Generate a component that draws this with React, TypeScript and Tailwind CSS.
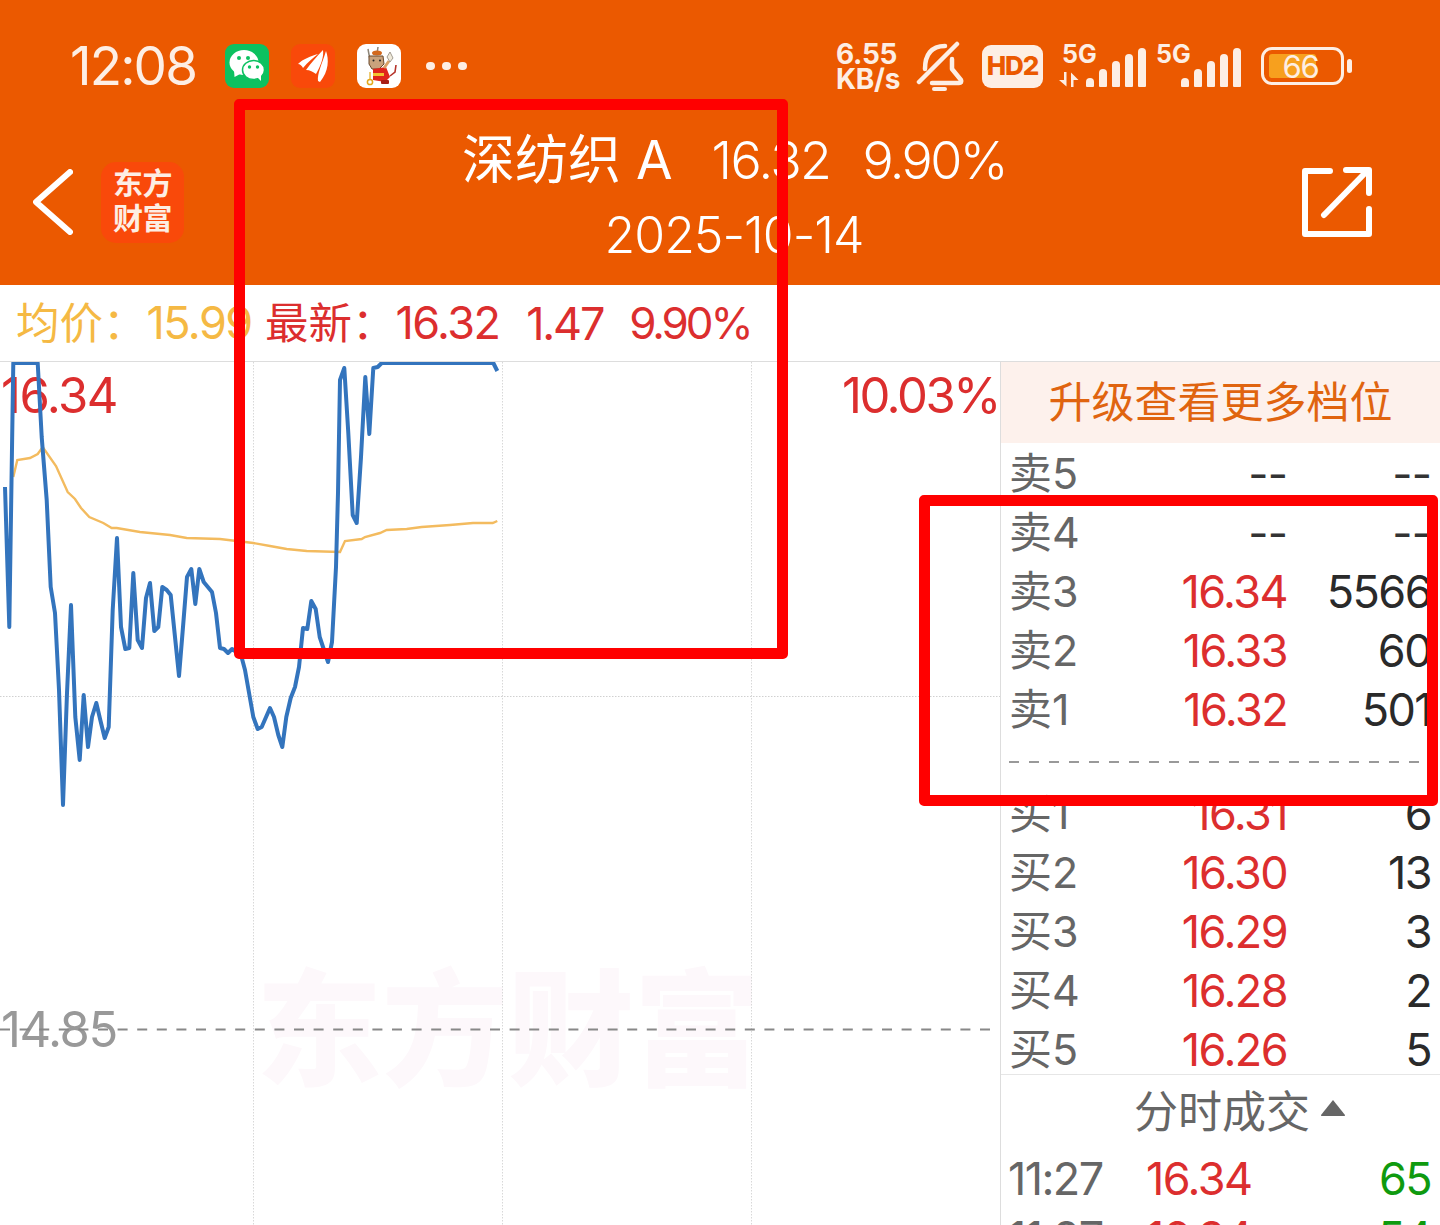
const blue = "5,487 9.3,627 13.3,363 37.7,363 41.7,437 46.7,500 50.7,587 55,613 59,690 63,805 67,693 71,605 75.3,717 79.7,760 83.7,695 88,747 92,717 96.3,703 100.3,720 104.7,738 108.7,727 112.7,610 117,538 121,627 125.3,649 129.3,648 133.3,573 137.7,640 142,648 146,598 150,583 154.3,631 158.3,627 162.3,587 166.7,590 170.7,595 175,637 179,676 183,627 187,577 191.3,569 195.3,604 199.3,569 203.7,582 212,592 216,613 220,648 224,649 228,653 232,649 241,655 245,670 253.3,717 257.7,729 261.7,727 270,708 274,717 278.3,735 282.3,747 286.3,717 290.7,698 295,687 299,667 303,628 307.3,629 311.3,601 315.7,609 319.7,637 328,662 332,642 336,567 338,493 340,380 344.3,368 348.3,433 352.7,515 356.7,523 361,457 365.3,377 369.3,434 373.3,368 377.7,367 381.7,363 493.3,363 497.3,371";
const yellow = "13.3,477 17.3,460 30,458 37.7,454 42.7,447 56,466 67.7,492 75,499 81,508 89.3,517 103.3,523 111.7,528 116.7,528 140,532 170,535 186.7,538 220,539 253.3,543 270,546 286.7,549 306.7,551 340,552 345,541 361.7,539 365,537 380,533 386.7,530 406.7,529 421.7,527 450,525 473,523 492.7,523 497.3,521";

const sells = [
  ["卖5", "--", "--"],
  ["卖4", "--", "--"],
  ["卖3", "16.34", "5566"],
  ["卖2", "16.33", "60"],
  ["卖1", "16.32", "501"],
];
const buys = [
  ["买1", "16.31", "6"],
  ["买2", "16.30", "13"],
  ["买3", "16.29", "3"],
  ["买4", "16.28", "2"],
  ["买5", "16.26", "5"],
];

function Row({ r }: { r: string[] }) {
  const dash = r[1] === "--";
  return (
    <div className="grid h-[59px] shrink-0 grid-cols-[100px_178px_144px] items-center pl-[8px] leading-none">
      <span className="text-[43px] text-[#666666]">{r[0]}</span>
      <span className={dash ? "text-right text-[44px] tracking-[-0.02em] text-[#333333]" : "text-right text-[45px] tracking-[-0.035em] text-[#dc2e2e]"}>{r[1]}</span>
      <span className={dash ? "text-right text-[44px] tracking-[-0.02em] text-[#333333]" : "text-right text-[45px] tracking-[-0.035em] text-[#2a2a2a]"}>{r[2]}</span>
    </div>
  );
}

function Tick({ t, p, q }: { t: string; p: string; q: string }) {
  return (
    <div className="grid h-[59px] shrink-0 grid-cols-[138px_107px_1fr] items-center pl-[7px] pr-[9px] text-[45px] leading-none tracking-[-0.035em]">
      <span className="text-[#666666]">{t}</span>
      <span className="text-[#dc2e2e]">{p}</span>
      <span className="text-right text-[#0f9a0f]">{q}</span>
    </div>
  );
}

function Bars({ hs }: { hs: number[] }) {
  return (
    <div className="flex items-end gap-[5px]">
      {hs.map((h, i) => (
        <div key={i} className="w-[8px] rounded-t-[4px] rounded-b-[1px] bg-[#fdeee4]" style={{ height: h }} />
      ))}
    </div>
  );
}

function WeChat() {
  return (
    <div className="h-[44px] w-[44px] rounded-[9px] bg-[#0cc160]">
      <svg viewBox="0 0 44 44" className="h-full w-full">
        <ellipse cx="19" cy="18.5" rx="14.5" ry="12.5" fill="#fff" />
        <path d="M9 26 L9.5 33 L17 29 Z" fill="#fff" />
        <ellipse cx="28.5" cy="26" rx="11" ry="9.5" fill="#fff" stroke="#0cc160" strokeWidth="1.5" />
        <path d="M32 33 L36 37 L36 31 Z" fill="#fff" />
        <circle cx="14" cy="14" r="2" fill="#0cc160" />
        <circle cx="23" cy="14" r="2" fill="#0cc160" />
        <circle cx="24.5" cy="23" r="1.7" fill="#0cc160" />
        <circle cx="32.5" cy="23" r="1.7" fill="#0cc160" />
      </svg>
    </div>
  );
}

function Wings() {
  return (
    <div className="h-[44px] w-[44px] rounded-[9px] bg-[#f9490a]">
      <svg viewBox="0 0 44 44" className="h-full w-full" fill="#fff">
        <path d="M7 20 C12 15 20 12 27 10 C22 14 17 18 12 24 C11 22 9 20 7 20 Z" />
        <path d="M15 26 C20 19 26 12 32 6 C33 13 30 21 25 30 C22 28 19 26 15 26 Z" />
        <path d="M27 37 C26 30 31 20 35 7 C38 15 38 27 29 38 Z" />
      </svg>
    </div>
  );
}

function Bull() {
  return (
    <div className="h-[44px] w-[44px] rounded-[9px] bg-white">
      <svg viewBox="0 0 44 44" className="h-full w-full">
        <path d="M11 5 L13 16 M21 3 L20 10" stroke="#8d8578" strokeWidth="1.5" />
        <ellipse cx="20" cy="9" rx="5" ry="2.5" fill="#d2691e" />
        <path d="M12 12 L26 12 L27 20 L22 25 L15 25 L12 20 Z" fill="#c9a27c" stroke="#6b4a2e" strokeWidth="1" />
        <circle cx="16.5" cy="16.5" r="1" fill="#222" />
        <circle cx="23" cy="16.5" r="1" fill="#222" />
        <path d="M16 25 L29 23 L33 33 L28 38 L16 36 Z" fill="#e0251b" />
        <path d="M27 24 L32 17" stroke="#d9a066" strokeWidth="3" />
        <path d="M30 13 L33 8 L36 14 L33 18 Z" fill="#efe9da" stroke="#8d8578" strokeWidth="0.8" />
        <path d="M33 32 L38 28 L39 21" fill="none" stroke="#b5332a" strokeWidth="1.6" />
        <circle cx="13" cy="38" r="2.6" fill="none" stroke="#e3a81a" strokeWidth="1.5" />
        <path d="M13 28 L13 35" stroke="#e3a81a" strokeWidth="1.2" />
        <rect x="16" y="29" width="11" height="3" fill="#f2c230" />
        <rect x="24" y="36" width="8" height="4" rx="1" fill="#a81e16" />
      </svg>
    </div>
  );
}

export default function App() {
  return (
    <div className="relative flex h-[1225px] w-[1440px] flex-col overflow-hidden bg-white font-[Inter,'Noto_Sans_CJK_SC',sans-serif]">
      <header className="flex h-[285px] shrink-0 flex-col bg-[#eb5900] text-white">
        <div className="flex h-[122px] shrink-0 items-center pl-[70px] pr-[88px] pt-[10px] text-[#fdeee4]">
          <span className="w-[155px] text-[53px] leading-none tracking-[-0.035em]">12:08</span>
          <div className="flex gap-[22px]">
            <WeChat />
            <Wings />
            <Bull />
          </div>
          <div className="ml-[25px] flex gap-[7px]">
            <span className="h-[8px] w-[9px] rounded-full bg-[#fdeee4]" />
            <span className="h-[8px] w-[9px] rounded-full bg-[#fdeee4]" />
            <span className="h-[8px] w-[9px] rounded-full bg-[#fdeee4]" />
          </div>
          <div className="ml-auto flex items-center">
            <div className="flex w-[66px] flex-col whitespace-nowrap pt-[1px] text-[28px] font-bold leading-[25px] tracking-[-0.01em]">
              <span>6.55</span>
              <span>KB/s</span>
            </div>
            <svg viewBox="0 0 50 50" className="ml-[14px] h-[50px] w-[50px]" fill="none" stroke="#fdeee4" strokeWidth="4.5" strokeLinecap="round" strokeLinejoin="round">
              <path d="M41 3 L3 41" />
              <path d="M9 28 C9 14 15 5 29 5" />
              <path d="M36 18 L36 28 L45 39 C46 41 45 42 43 42 L16 42" />
              <path d="M18 48 L29 48" strokeWidth="4" />
            </svg>
            <div className="ml-[16px] flex h-[43px] w-[61px] items-center justify-center rounded-[9px] bg-[#fdeee4] text-[26px] font-extrabold leading-none tracking-[-0.04em] text-[#eb5900]">
              HD2
            </div>
            <div className="relative ml-[16px] flex h-[42px] items-end">
              <span className="absolute left-[3px] top-[-3px] text-[25px] font-bold leading-none">5G</span>
              <svg viewBox="0 0 20 15" className="mr-[7px] h-[15px] w-[20px]" fill="#fdeee4">
                <path d="M5 0 H7.5 V14.5 L0 8 H5 Z" />
                <path d="M12 0.5 L19.5 8 H14.5 V15 H12 Z" />
              </svg>
              <Bars hs={[9, 18, 26, 33, 39]} />
            </div>
            <div className="relative ml-[10px] flex h-[42px] w-[85px] items-end justify-end">
              <span className="absolute left-0 top-[-3px] text-[25px] font-bold leading-none">5G</span>
              <Bars hs={[9, 18, 26, 33, 39]} />
            </div>
            <div className="ml-[20px] flex items-center gap-[3px]">
              <div className="flex h-[38px] w-[83px] items-center rounded-[11px] border-[3px] border-[#fdeee4] pl-[5px]">
                <div className="flex h-[24px] w-[47px] items-center justify-center rounded-[3px] bg-[#f7a01e]">
                  <span className="translate-x-[8px] text-[31px] leading-none tracking-[-0.04em] text-[#fdeee4]">66</span>
                </div>
              </div>
              <div className="h-[14px] w-[5px] rounded-full bg-[#fdeee4]" />
            </div>
          </div>
        </div>
        <div className="flex h-[163px] items-center pb-[3px] pl-[33px] pr-[68px]">
          <svg viewBox="0 0 40 66" className="h-[66px] w-[40px]" fill="none" stroke="#fff" strokeWidth="6" strokeLinecap="round" strokeLinejoin="round">
            <path d="M37 3 L3 33 L37 63" />
          </svg>
          <div className="ml-[28px] flex h-[81px] w-[83px] flex-col items-center justify-center rounded-[15px] bg-[#f9490a] pb-[2px] text-[30px] font-bold leading-[35px] tracking-[-0.02em] text-[#fdeee4]">
            <span>东方</span>
            <span>财富</span>
          </div>
          <div className="flex flex-1 flex-col items-center pb-[9px] pr-[18px] leading-[74px]">
            <div className="flex items-baseline text-[52px] font-light">
              <span className="text-[53px] font-normal">深纺织 A</span>
              <span className="ml-[39px] tracking-[-0.03em]">16.32</span>
              <span className="ml-[32px] tracking-[-0.05em]">9.90%</span>
            </div>
            <span className="text-[50px] font-light tracking-[-0.02em]">2025-10-14</span>
          </div>
          <svg viewBox="0 0 70 70" className="h-[70px] w-[70px]" fill="none" stroke="#fff" strokeWidth="6" strokeLinecap="round" strokeLinejoin="round">
            <path d="M28 4 L3 4 L3 67 L67 67 L67 42" />
            <path d="M22 48 L65 4" />
            <path d="M44 3 L67 3 L67 26" />
          </svg>
        </div>
      </header>

      <div className="flex h-[77px] shrink-0 items-center border-b border-[#dddddd] pl-[16px] leading-none">
        <span className="w-[249px] text-[43.5px] text-[#f5b944]">
          均价：<span className="text-[45px] tracking-[-0.035em]">15.99</span>
        </span>
        <span className="text-[43.5px] text-[#dc2e2e]">
          最新：<span className="text-[45px] tracking-[-0.035em]">16.32</span>
        </span>
        <span className="ml-[27px] text-[45px] tracking-[-0.05em] text-[#dc2e2e]">1.47</span>
        <span className="ml-[26px] text-[44px] tracking-[-0.07em] text-[#dc2e2e]">9.90%</span>
      </div>

      <main className="flex min-h-0 flex-1">
        <section className="relative w-[1000px] shrink-0">
          <div className="absolute left-[256px] top-[605px] text-[126px] font-black leading-none text-[#fdf8fb]">东方财富</div>
          <span className="absolute left-[1px] top-[9px] text-[49px] leading-none tracking-[-0.03em] text-[#dc2e2e]">16.34</span>
          <span className="absolute right-[1px] top-[9px] text-[49px] leading-none tracking-[-0.05em] text-[#dc2e2e]">10.03%</span>
          <span className="absolute left-[1px] top-[643px] text-[49px] leading-none tracking-[-0.03em] text-[#999999]">14.85</span>
          <svg viewBox="0 362 1000 863" className="relative z-10 block h-[863px] w-[1000px]" fill="none">
            <path d="M253.5 362V1225M502.5 362V1225M751.5 362V1225" stroke="#d8d8d8" strokeWidth="1" strokeDasharray="1.5 1.5" />
            <path d="M0 696.5H1000" stroke="#d0d0d0" strokeWidth="1" strokeDasharray="1.5 1.5" />
            <path d="M0 1029.5H992" stroke="#888888" strokeWidth="2" strokeDasharray="10 9.6" />
            <polyline points={yellow} stroke="#f3bb5f" strokeWidth="2.4" />
            <polyline points={blue} stroke="#3374bd" strokeWidth="4" strokeLinejoin="round" />
          </svg>
        </section>

        <aside className="flex w-[440px] shrink-0 flex-col border-l border-[#dddddd]">
          <div className="flex h-[81px] shrink-0 items-center justify-center bg-[#fdf1ec] text-[43px] leading-none text-[#e0640f]">
            升级查看更多档位
          </div>
          <div className="flex h-[297px] shrink-0 flex-col pt-[1px]">
            {sells.map((r) => (
              <Row key={r[0]} r={r} />
            ))}
          </div>
          <div className="flex h-[44px] shrink-0 items-center px-[8px] pr-[20px]">
            <div className="h-[2px] w-full bg-[repeating-linear-gradient(90deg,#999999_0_10px,transparent_10px_20px)]" />
          </div>
          <div className="flex h-[291px] shrink-0 flex-col border-b border-[#e6e6e6]">
            {buys.map((r) => (
              <Row key={r[0]} r={r} />
            ))}
          </div>
          <div className="flex h-[74px] shrink-0 items-center pb-[1px] pl-[133px]">
            <span className="text-[44px] leading-none text-[#666666]">分时成交</span>
            <svg viewBox="0 0 26 18" className="ml-[10px] h-[18px] w-[26px] -translate-y-[4px]" fill="#666666">
              <path d="M13 1 L25 16 Q25.5 17 24 17 L2 17 Q0.5 17 1 16 Z" />
            </svg>
          </div>
          <Tick t="11:27" p="16.34" q="65" />
          <Tick t="11:27" p="16.34" q="54" />
        </aside>
      </main>

      <div className="pointer-events-none absolute left-[234px] top-[99px] z-20 h-[560px] w-[554px] rounded-[5px] border-[11px] border-[#ff0000]" />
      <div className="pointer-events-none absolute left-[919px] top-[495px] z-20 h-[311px] w-[519px] rounded-[5px] border-[11px] border-[#ff0000]" />
    </div>
  );
}
